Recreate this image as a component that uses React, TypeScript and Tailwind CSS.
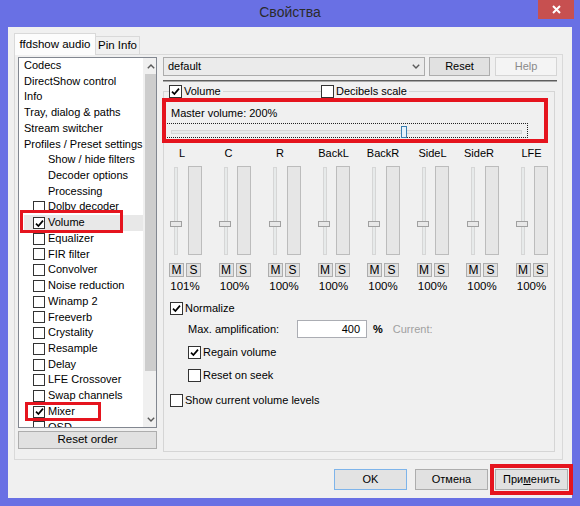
import React from 'react';

type Item = { t: string; lvl: 0 | 1 | 2; on?: boolean; sel?: boolean };

const items: Item[] = [
  { t: 'Codecs', lvl: 0 },
  { t: 'DirectShow control', lvl: 0 },
  { t: 'Info', lvl: 0 },
  { t: 'Tray, dialog & paths', lvl: 0 },
  { t: 'Stream switcher', lvl: 0 },
  { t: 'Profiles / Preset settings', lvl: 0 },
  { t: 'Show / hide filters', lvl: 1 },
  { t: 'Decoder options', lvl: 1 },
  { t: 'Processing', lvl: 1 },
  { t: 'Dolby decoder', lvl: 2 },
  { t: 'Volume', lvl: 2, on: true, sel: true },
  { t: 'Equalizer', lvl: 2 },
  { t: 'FIR filter', lvl: 2 },
  { t: 'Convolver', lvl: 2 },
  { t: 'Noise reduction', lvl: 2 },
  { t: 'Winamp 2', lvl: 2 },
  { t: 'Freeverb', lvl: 2 },
  { t: 'Crystality', lvl: 2 },
  { t: 'Resample', lvl: 2 },
  { t: 'Delay', lvl: 2 },
  { t: 'LFE Crossover', lvl: 2 },
  { t: 'Swap channels', lvl: 2 },
  { t: 'Mixer', lvl: 2, on: true },
  { t: 'OSD', lvl: 2 },
];

const channels = [
  { name: 'L', pct: '101%', shift: 'pr-[6px]' },
  { name: 'C', pct: '100%', shift: 'pr-[12px]' },
  { name: 'R', pct: '100%', shift: 'pr-[8px]' },
  { name: 'BackL', pct: '100%', shift: '' },
  { name: 'BackR', pct: '100%', shift: '' },
  { name: 'SideL', pct: '100%', shift: '' },
  { name: 'SideR', pct: '100%', shift: 'pr-[6px]' },
  { name: 'LFE', pct: '100%', shift: '' },
];

// win8 style checkbox
const Check: React.FC<{ on?: boolean; small?: boolean }> = ({ on, small }) => (
  <span
    className={
      small
        ? 'w-[12px] h-[12px] shrink-0 border border-[#333333] bg-white flex items-center justify-center'
        : 'w-[13px] h-[13px] shrink-0 border border-[#333333] bg-white flex items-center justify-center'
    }
  >
    {on && (
      <svg width="9" height="9" viewBox="0 0 9 9">
        <path d="M1 4.6 L3.4 7 L8 1.6" fill="none" stroke="#000" strokeWidth="1.7" />
      </svg>
    )}
  </span>
);

const Btn: React.FC<{ children: React.ReactNode; className?: string; disabled?: boolean }> = ({
  children,
  className = '',
  disabled,
}) => (
  <div
    className={
      (disabled
        ? 'border border-[#d5d5d5] bg-[#f4f4f4] text-[#8a8a8a] '
        : 'border border-[#adadad] bg-[#e1e1e1] text-black ') +
      'flex items-center justify-center shrink-0 ' +
      className
    }
  >
    {children}
  </div>
);

const Chevron: React.FC<{ up?: boolean }> = ({ up }) => (
  <svg width="8" height="5" viewBox="0 0 8 5">
    <path
      d={up ? 'M0.8 4.2 L4 1 L7.2 4.2' : 'M0.8 0.8 L4 4 L7.2 0.8'}
      fill="none"
      stroke="#5a5a5a"
      strokeWidth="1.4"
    />
  </svg>
);

const FilterList: React.FC = () => (
  <div className="relative h-[371px] border border-[#828790] bg-white flex overflow-hidden">
    <div className="flex-1 flex flex-col">
      {items.map((it) => (
        <div
          key={it.t}
          className={
            'h-[15.73px] shrink-0 ml-[5px] flex items-center leading-[15.73px] whitespace-nowrap ' +
            (it.sel ? 'bg-[#e8e8e8]' : '')
          }
        >
          {it.lvl === 0 && <span>{it.t}</span>}
          {it.lvl === 1 && <span className="pl-[24px]">{it.t}</span>}
          {it.lvl === 2 && (
            <span className="pl-[9px] flex items-center">
              <Check small on={it.on} />
              <span className="ml-[3px]">{it.t}</span>
            </span>
          )}
        </div>
      ))}
    </div>
    {/* scrollbar */}
    <div className="w-[16px] shrink-0 bg-[#f0f0f0] flex flex-col">
      <div className="h-[16px] flex items-center justify-center">
        <Chevron up />
      </div>
      <div className="h-[297px] mx-[2px] bg-[#cdcdcd]" />
      <div className="flex-1" />
      <div className="h-[16px] flex items-center justify-center">
        <Chevron />
      </div>
    </div>
    {/* annotation boxes */}
    <div className="absolute left-[1px] top-[152px] w-[103px] h-[23px] border-[3px] border-[#e5141e] pointer-events-none" />
    <div className="absolute left-[6px] top-[344px] w-[76px] h-[19px] border-[3px] border-[#e5141e] pointer-events-none" />
  </div>
);

const Channel: React.FC<{ name: string; pct: string; shift: string }> = ({ name, pct, shift }) => (
  <div className="w-[33px] shrink-0 flex flex-col items-center">
    <div className={'h-[14px] leading-[14px] whitespace-nowrap ' + shift}>{name}</div>
    <div className="mt-[6px] h-[89px] w-full flex">
      <div className="relative ml-[1px] w-[13px] flex justify-center">
        <div className="mt-[1px] w-[4px] h-[88px] bg-[#e7eaea] border border-[#d6d6d6]" />
        <div className="absolute left-0 top-[55px] w-[12px] h-[6px] bg-[#e8e8e8] border border-[#a0a0a0]" />
      </div>
      <div className="ml-[5px] w-[14px] h-full bg-[#e6e6e6] border border-[#bcbcbc]" />
    </div>
    <div className="mt-[8px] flex gap-[2px]">
      <Btn className="w-[15px] h-[14px] text-[12px]">M</Btn>
      <Btn className="w-[15px] h-[14px] text-[12px]">S</Btn>
    </div>
    <div className="mt-[2px] h-[14px] leading-[14px] text-[11.5px]">{pct}</div>
  </div>
);

const VolumePage: React.FC = () => (
  <div className="ml-[6px] w-[394px] flex flex-col">
    {/* preset row */}
    <div className="h-[19px] flex">
      <div className="w-[262px] h-full border border-[#acacac] bg-[#ebebeb] flex items-center justify-between pl-[4px] pr-[4px]">
        <span>default</span>
        <Chevron />
      </div>
      <Btn className="ml-[4px] w-[61px] h-full">Reset</Btn>
      <Btn disabled className="ml-[5px] w-[62px] h-full">
        Help
      </Btn>
    </div>
    <div className="mt-[4px] h-[1px] bg-[#5e5e5e]" />
    <div className="h-[1px] bg-[#a8a8a8]" />

    {/* group box */}
    <div className="relative mt-[9px] w-[392px] h-[361px] border border-[#d5d5d5] flex flex-col">
      <div className="-mt-[7px] h-[13px] flex items-center pl-[5px]">
        <div className="w-[152px]">
          <span className="inline-flex items-center bg-[#f0f0f0] pr-[2px]">
            <Check on />
            <span className="ml-[2px]">Volume</span>
          </span>
        </div>
        <span className="inline-flex items-center bg-[#f0f0f0] pr-[2px]">
          <Check />
          <span className="ml-[2px]">Decibels scale</span>
        </span>
      </div>

      <div className="mt-[8px] h-[14px] leading-[14px] pl-[7px]">Master volume: 200%</div>
      <div className="mt-[3px] ml-[1px] w-[363px] h-[15px] border border-dotted border-[#222] flex items-center pt-[2px]">
        <div className="relative ml-[5px] w-[351px] h-[4px] bg-[#e7eaea] border border-[#d6d6d6]">
          <div className="absolute left-[229px] -top-[5px] w-[6px] h-[12px] bg-[#e5f1fb] border border-[#3c7fb1]" />
        </div>
      </div>

      <div className="mt-[8px] pl-[4.5px] flex gap-[16.5px]">
        {channels.map((c) => (
          <Channel key={c.name} {...c} />
        ))}
      </div>

      <div className="mt-[8px] h-[14px] pl-[6px] flex items-center">
        <Check on />
        <span className="ml-[2px]">Normalize</span>
      </div>
      <div className="mt-[5px] h-[18px] pl-[24px] flex items-center">
        <span className="w-[109px]">Max. amplification:</span>
        <div className="w-[70px] h-full border border-[#abadb3] bg-white flex items-center justify-end pr-[6px]">
          400
        </div>
        <span className="ml-[6px] font-bold">%</span>
        <span className="ml-[10px] text-[#a0a0a0]">Current:</span>
      </div>
      <div className="mt-[8px] h-[13px] pl-[24px] flex items-center">
        <Check on />
        <span className="ml-[2px]">Regain volume</span>
      </div>
      <div className="mt-[10px] h-[13px] pl-[24px] flex items-center">
        <Check />
        <span className="ml-[2px]">Reset on seek</span>
      </div>
      <div className="mt-[12px] h-[13px] pl-[6px] flex items-center">
        <Check />
        <span className="ml-[2px]">Show current volume levels</span>
      </div>

      {/* annotation box */}
      <div className="absolute -left-[2px] top-[6px] w-[386px] h-[45px] border-[4px] border-[#e5141e] pointer-events-none" />
    </div>
  </div>
);

export default function App() {
  return (
    <div className="w-[580px] h-[506px] bg-[#6970e4] flex flex-col font-['Liberation_Sans',Arial,sans-serif] text-[11px] text-black overflow-hidden select-none">
      {/* title bar */}
      <div className="h-[27px] shrink-0 grid grid-cols-[1fr_auto_1fr] items-start">
        <div />
        <div className="text-[14px] leading-[24px] text-[#2b2b2b]">Свойства</div>
        <div className="flex justify-end pr-[6px]">
          <div className="w-[36px] h-[19px] bg-[#c75050] flex items-center justify-center">
            <svg width="9" height="9" viewBox="0 0 9 9">
              <path d="M1 1 L8 8 M8 1 L1 8" stroke="#fff" strokeWidth="2" />
            </svg>
          </div>
        </div>
      </div>

      {/* client area */}
      <div className="mx-[8px] mb-[8px] flex-1 bg-[#f0f0f0] flex flex-col pt-[6px] px-[6px]">
        <div className="h-[21px] flex items-end relative z-10">
          <div className="w-[82px] h-[22px] -mb-[1px] border border-b-0 border-[#d9d9d9] bg-[#fcfcfc] flex justify-center pt-[2px] leading-[16px] text-[11.5px]">
            ffdshow audio
          </div>
          <div className="w-[44px] h-[18px] border border-l-0 border-b-0 border-[#d9d9d9] bg-[#f0f0f0] flex items-center justify-center text-[11.5px]">
            Pin Info
          </div>
        </div>
        <div className="w-[549px] h-[406px] shrink-0 border border-[#d9d9d9] bg-[#f0f0f0] flex pt-[2px] pl-[3px]">
          <div className="w-[139px] flex flex-col">
            <FilterList />
            <Btn className="mt-[3px] h-[18px] w-full text-[11.5px]">Reset order</Btn>
          </div>
          <VolumePage />
        </div>

        {/* dialog buttons */}
        <div className="flex-1 flex items-center justify-end -mr-[7px]">
          <Btn className="w-[73px] h-[21px] !border-[#7eb4ea] !bg-[#e3e3e3]">OK</Btn>
          <Btn className="ml-[8px] w-[73px] h-[21px]">Отмена</Btn>
          <div className="ml-[2px] border-[4px] border-[#e5141e] p-[1px]">
            <Btn className="w-[73px] h-[21px]">
              При<span className="underline">м</span>енить
            </Btn>
          </div>
        </div>
      </div>
    </div>
  );
}
